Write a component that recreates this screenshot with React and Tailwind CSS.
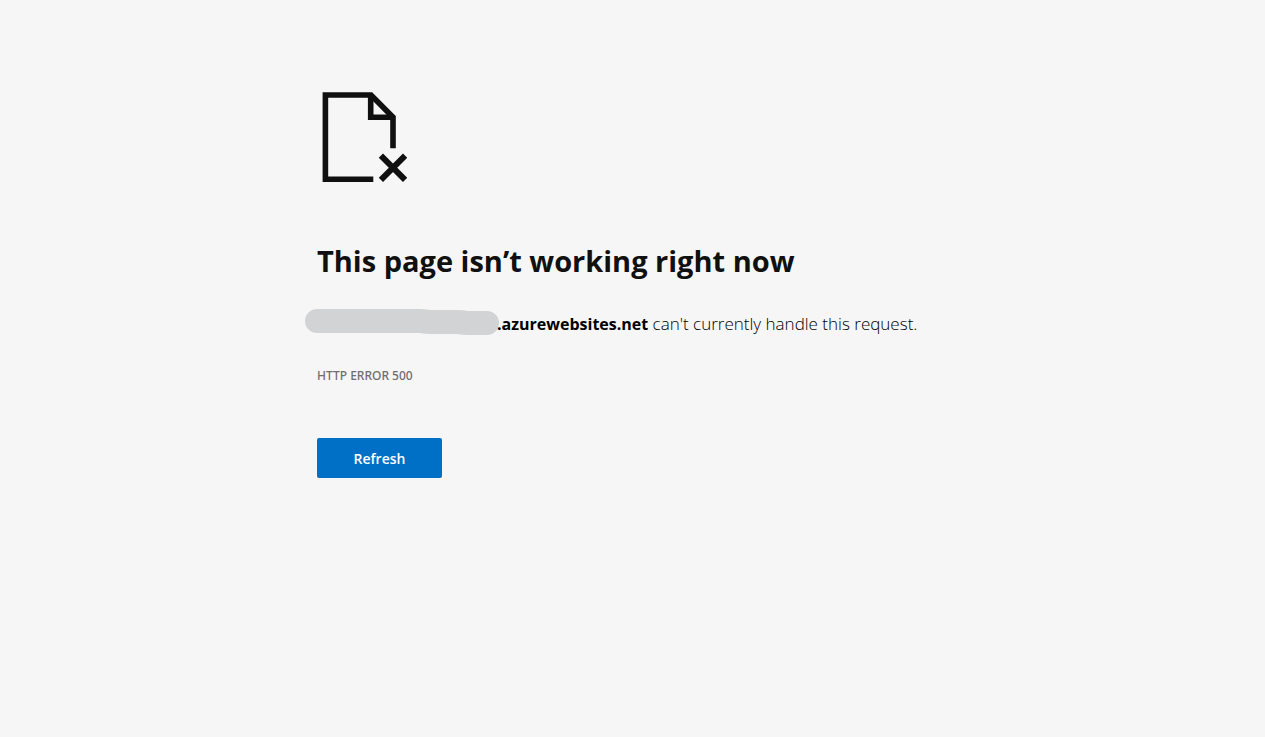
import React from 'react';

function BrokenPageIcon() {
  return (
    <svg width="90" height="90" viewBox="0 0 90 90" aria-hidden="true">
      <g fill="none" stroke="#101010" strokeWidth="5.6">
        <path d="M56.3 87.2H8.4V3H54L76 25.2V56.2" />
        <path d="M53.7 3V25.3H76" />
        <path d="M63.9 63.7L88.1 87.9M88.1 63.7L63.9 87.9" strokeWidth="6" />
      </g>
    </svg>
  );
}

// marker stroke that hides the site name
function RedactedName() {
  return (
    <svg
      className="-ml-3 -mr-0.5 shrink-0"
      width="194"
      height="26"
      viewBox="0 0 194 26"
      role="img"
      aria-label="Hidden site name"
    >
      <path
        d="M12 0H114Q120 0 126 1H152Q158 1 163 2H182A12 12 0 0 1 182 26H163Q158 26 152 25H126Q120 25 114 24H12A12 12 0 0 1 12 0Z"
        fill="#d1d3d4"
      />
    </svg>
  );
}

function App() {
  const handleRefresh = () => window.location.reload();

  return (
    <div className="min-h-screen bg-[#f6f6f6] text-[#101010] font-['Segoe_UI','Open_Sans',sans-serif]">
      <main className="mx-auto max-w-[631px] pt-[92px]">
        <BrokenPageIcon />

        <h1 className="mt-[60px] text-[29px] leading-[38px] font-bold">
          This page isn’t working right now
        </h1>

        <div className="mt-[29px] flex items-start leading-[29px]">
          <RedactedName />
          <p className="text-[17px] font-light text-black">
            <strong className="text-base leading-[29px] font-bold">.azurewebsites.net</strong> can't currently handle this request.
          </p>
        </div>

        <p className="mt-[27px] font-['Segoe_UI','Noto_Sans',sans-serif] text-xs leading-5 font-medium text-[#6e6e6e]">
          HTTP ERROR 500
        </p>

        <button
          type="button"
          onClick={handleRefresh}
          className="mt-[52px] h-10 w-[125px] rounded-xs bg-[#0070c6] pt-0.5 text-sm font-semibold text-white hover:bg-[#0062ae]"
        >
          Refresh
        </button>
      </main>
    </div>
  );
}

export default App;
